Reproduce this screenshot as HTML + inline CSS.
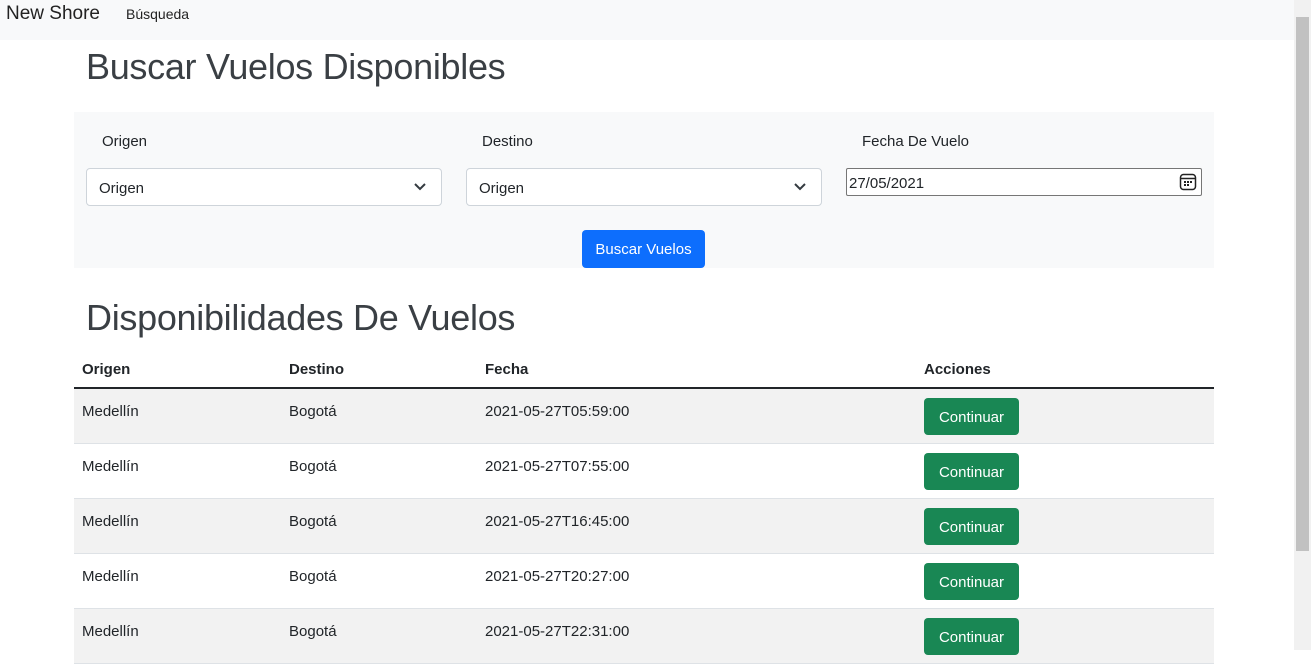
<!DOCTYPE html>
<html><head><meta charset="utf-8"><style>
*{box-sizing:border-box;margin:0;padding:0}
body{width:1311px;height:650px;overflow:hidden;font-family:"Liberation Sans",sans-serif;color:#212529;background:#fff;position:relative;font-size:15px}
.nav{position:absolute;left:0;top:0;width:1294px;height:40px;background:#f8f9fa}
.brand{position:absolute;left:6px;top:3px;font-size:19px;color:#222}
.link{position:absolute;left:126px;top:6px;font-size:14px;color:#222}
h1{position:absolute;font-weight:normal;font-size:36px;color:#3a3f44;left:86px;letter-spacing:-0.3px}
.panel{position:absolute;left:74px;top:112px;width:1140px;height:156px;background:#f8f9fa}
.lbl{position:absolute;top:133px;font-size:15px}
.sel{position:absolute;top:168px;width:356px;height:38px;background:#fff;border:1px solid #ced4da;border-radius:4px;padding:11px 12px 0;font-size:15px}
.sel svg{position:absolute;right:14px;top:13px}
.date{position:absolute;left:846px;top:168px;width:356px;height:28px;background:#fff;border:1px solid #767676;border-radius:2px;padding:6px 2px 0;font-size:15px}
.btn{position:absolute;color:#fff;border-radius:4px;font-size:15px;text-align:center}
.blue{left:582px;top:230px;width:123px;height:38px;background:#0d6efd;line-height:40px}
.th{position:absolute;top:361px;font-weight:bold;font-size:15px}
.hl{position:absolute;left:74px;top:387px;width:1140px;height:2px;background:#212529}
.row{position:absolute;left:74px;width:1140px;height:55px;border-bottom:1px solid #dee2e6}
.row span{position:absolute;top:14px}
.row .g{left:850px;top:9px;width:95px;height:37px;background:#198754;line-height:39px}
.sb{position:absolute;left:1294px;top:0;width:17px;height:650px;background:#f1f1f1}
.th2{position:absolute;left:1296px;top:17px;width:13px;height:534px;background:#c1c1c1}
</style></head><body>
<div class="nav"><span class="brand">New Shore</span><span class="link">Búsqueda</span></div>
<h1 style="top:46px">Buscar Vuelos Disponibles</h1>
<div class="panel"></div>
<span class="lbl" style="left:102px">Origen</span>
<span class="lbl" style="left:482px">Destino</span>
<span class="lbl" style="left:862px">Fecha De Vuelo</span>
<div class="sel" style="left:86px">Origen<svg width="14" height="10" viewBox="0 0 14 10"><path d="M2 2l5 5 5-5" fill="none" stroke="#343a40" stroke-width="2"/></svg></div>
<div class="sel" style="left:466px">Origen<svg width="14" height="10" viewBox="0 0 14 10"><path d="M2 2l5 5 5-5" fill="none" stroke="#343a40" stroke-width="2"/></svg></div>
<div class="date">27/05/2021<svg style="position:absolute;right:4px;top:4px" width="18" height="18" viewBox="0 0 18 18"><rect x="1.5" y="1.5" width="15" height="15" rx="3" fill="none" stroke="#222" stroke-width="1.5"/><line x1="1.5" y1="5.5" x2="16.5" y2="5.5" stroke="#222" stroke-width="1.5"/><rect x="5" y="8" width="2" height="2" fill="#222"/><rect x="8" y="8" width="2" height="2" fill="#222"/><rect x="11" y="8" width="2" height="2" fill="#222"/><rect x="5" y="11" width="2" height="2" fill="#222"/><rect x="8" y="11" width="2" height="2" fill="#222"/></svg></div>
<div class="btn blue">Buscar Vuelos</div>
<h1 style="top:297px">Disponibilidades De Vuelos</h1>
<span class="th" style="left:82px">Origen</span><span class="th" style="left:289px">Destino</span><span class="th" style="left:485px">Fecha</span><span class="th" style="left:924px">Acciones</span>
<div class="hl"></div>
<div class="row" style="top:389px;background:#f2f2f2"><span style="left:8px">Medellín</span><span style="left:215px">Bogotá</span><span style="left:411px">2021-05-27T05:59:00</span><span class="btn g">Continuar</span></div>
<div class="row" style="top:444px"><span style="left:8px">Medellín</span><span style="left:215px">Bogotá</span><span style="left:411px">2021-05-27T07:55:00</span><span class="btn g">Continuar</span></div>
<div class="row" style="top:499px;background:#f2f2f2"><span style="left:8px">Medellín</span><span style="left:215px">Bogotá</span><span style="left:411px">2021-05-27T16:45:00</span><span class="btn g">Continuar</span></div>
<div class="row" style="top:554px"><span style="left:8px">Medellín</span><span style="left:215px">Bogotá</span><span style="left:411px">2021-05-27T20:27:00</span><span class="btn g">Continuar</span></div>
<div class="row" style="top:609px;background:#f2f2f2"><span style="left:8px">Medellín</span><span style="left:215px">Bogotá</span><span style="left:411px">2021-05-27T22:31:00</span><span class="btn g">Continuar</span></div>
<div class="sb"></div><div class="th2"></div>
</body></html>
